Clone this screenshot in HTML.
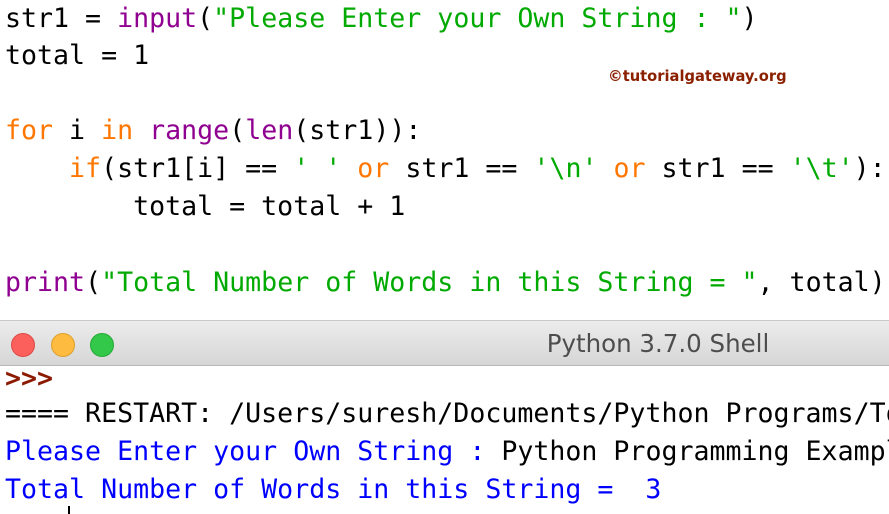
<!DOCTYPE html>
<html><head><meta charset="utf-8"><style>
body{margin:0;width:889px;height:514px;overflow:hidden;background:#fff;position:relative}
.l{position:absolute;left:5px;font-family:"DejaVu Sans Mono","Liberation Mono",monospace;font-size:26.6px;white-space:pre;line-height:38px;color:#000}
.k{color:#ff7700}.b{color:#900090}.s{color:#00aa00}.o{color:#0000ff}.r{color:#8b1a00}
.bar{position:absolute;left:0;top:320px;width:889px;height:44px;background:linear-gradient(#ececec,#d6d6d6);border-top:1px solid #c8c8c8;border-bottom:1px solid #b8b8b8}
.d{position:absolute;top:12px;width:22px;height:22px;border-radius:50%}
</style></head><body>
<div class="l" style="top:0px">str1 = <span class="b">input</span>(<span class="s">"Please Enter your Own String : "</span>)</div>
<div class="l" style="top:37px">total = 1</div>
<div style="position:absolute;left:608px;top:68px;font-family:'DejaVu Sans',sans-serif;font-weight:bold;font-size:14.7px;color:#8b2000">©tutorialgateway.org</div>
<div class="l" style="top:112px"><span class="k">for</span> i <span class="k">in</span> <span class="b">range</span>(<span class="b">len</span>(str1)):</div>
<div class="l" style="top:150px">    <span class="k">if</span>(str1[i] == <span class="s">' '</span> <span class="k">or</span> str1 == <span class="s">'\n'</span> <span class="k">or</span> str1 == <span class="s">'\t'</span>):</div>
<div class="l" style="top:188px">        total = total + 1</div>
<div class="l" style="top:264px"><span class="b">print</span>(<span class="s">"Total Number of Words in this String = "</span>, total)</div>
<div class="bar">
<div class="d" style="left:11px;background:#fc605c;border:1px solid #de4a45"></div>
<div class="d" style="left:51px;background:#fdbc40;border:1px solid #de9e2a"></div>
<div class="d" style="left:90px;background:#34c84a;border:1px solid #23a936"></div>
<div style="position:absolute;left:0;width:1316px;top:8px;text-align:center;font-family:'DejaVu Sans',sans-serif;font-size:24.5px;color:#4d4d4d">Python 3.7.0 Shell</div>
</div>
<div class="l r" style="top:360px;font-weight:bold">&gt;&gt;&gt;</div>
<div class="l" style="top:395px">==== RESTART: /Users/suresh/Documents/Python Programs/To</div>
<div class="l o" style="top:433px">Please Enter your Own String : <span style="color:#000">Python Programming Exampl</span></div>
<div class="l o" style="top:471px">Total Number of Words in this String =  3</div>
<div style="position:absolute;left:68px;top:506px;width:2px;height:8px;background:#000"></div>
</body></html>
